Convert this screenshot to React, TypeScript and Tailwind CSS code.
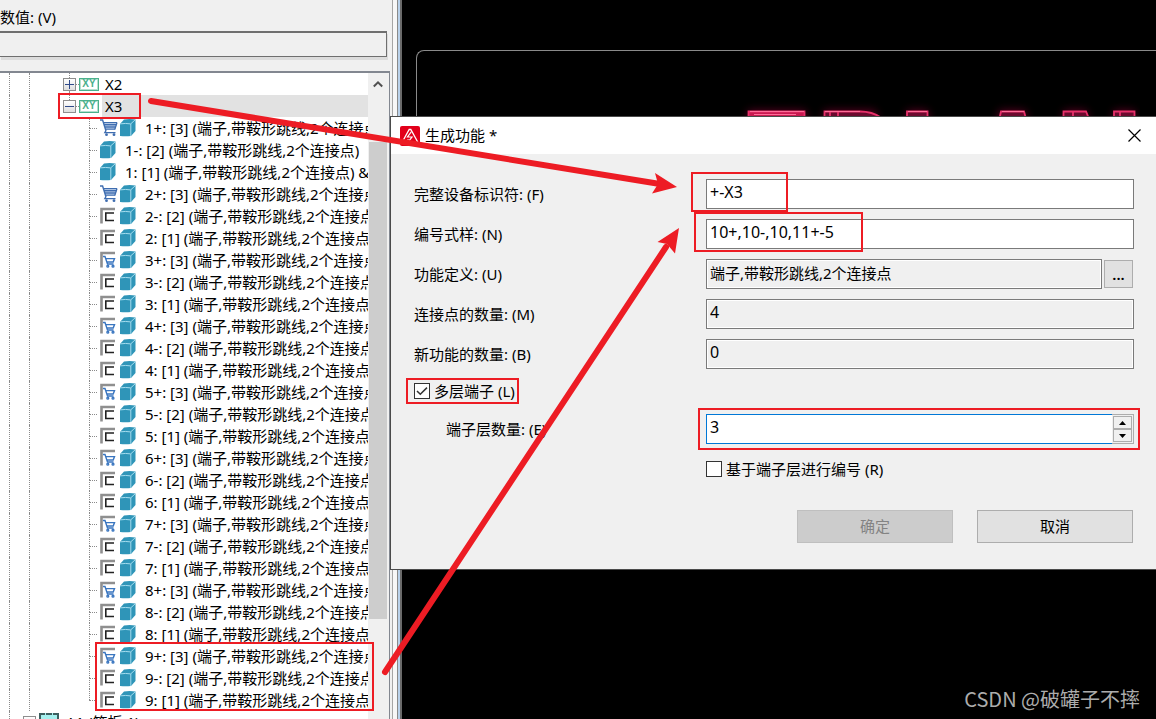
import type { ReactNode } from "react";

const SANS = "font-['Noto_Sans','Noto_Sans_CJK_SC',sans-serif]";

type Mark = "cart" | "bracket" | "bracketCart" | "none";

interface Terminal {
  mark: Mark;
  text: string;
}

const PART = "(端子,带鞍形跳线,2个连接点)";

const terminals: Terminal[] = [
  { mark: "cart", text: `1+: [3] ${PART}` },
  { mark: "none", text: `1-: [2] ${PART}` },
  { mark: "none", text: `1: [1] ${PART} &` },
  { mark: "cart", text: `2+: [3] ${PART}` },
  { mark: "bracket", text: `2-: [2] ${PART}` },
  { mark: "bracket", text: `2: [1] ${PART}` },
  ...[3, 4, 5, 6, 7, 8, 9].flatMap((n): Terminal[] => [
    { mark: "bracketCart", text: `${n}+: [3] ${PART}` },
    { mark: "bracket", text: `${n}-: [2] ${PART}` },
    { mark: "bracket", text: `${n}: [1] ${PART}` },
  ]),
];

function CubeIcon() {
  return (
    <svg className="h-[18px] w-4 shrink-0" viewBox="0 0 16 18" aria-hidden="true">
      <path d="M0 5 4 .5Q9.500 -.3 15.500 .5V12L11 17Q5.500 17.700 0 17Z" fill="#2f95b8" />
      <path d="M0 4.900Q5.500 4 10.700 4.900L15.200 .8M10.800 4.900V17" fill="none" stroke="#a5dcee" strokeWidth="1" />
    </svg>
  );
}

function CartIcon() {
  return (
    <svg className="h-[18px] w-[18px] shrink-0" viewBox="0 0 18 18" aria-hidden="true">
      <path d="M3.300 3H17L14.600 10.500H5.600Z" fill="#d5e2f4" />
      <g fill="none" stroke="#3f6db0">
        <path d="M0 1H2.600L6 12M3.400 3.600H17M4 5.800H16.400M4.700 8H15.600M5.300 10.100H15" strokeWidth="1.400" />
        <path d="M17 3.500 14.800 10.500M6 11.700 4.800 13.700H15.500" strokeWidth="1.300" />
      </g>
      <circle cx="6.500" cy="15.700" r="1.400" fill="#3f6db0" />
      <circle cx="14" cy="15.700" r="1.400" fill="#3f6db0" />
    </svg>
  );
}

function BracketIcon({ cart }: { cart?: boolean }) {
  return (
    <svg className="h-[18px] w-[18px] shrink-0" viewBox="0 0 18 18" aria-hidden="true">
      <path d="M1.500 16.500V2H15" fill="none" stroke="#8f8f8f" strokeWidth="2.600" />
      {cart ? (
        <g fill="none" stroke="#3a76c0" strokeWidth="1.400">
          <path d="M3 5.500H5L7.500 13H13.500M5.600 7.600H14.500L13.200 11H7" />
          <circle cx="7.800" cy="15.200" r=".9" />
          <circle cx="13" cy="15.200" r=".9" />
        </g>
      ) : (
        <path d="M14 6H5.800V13.500H14" fill="none" stroke="#222" strokeWidth="1.600" />
      )}
    </svg>
  );
}

function Expander({ open }: { open: boolean }) {
  return (
    <button
      type="button"
      aria-label={open ? "折叠" : "展开"}
      className="flex h-[13px] w-[13px] shrink-0 items-center justify-center border border-[#8e8e8e] bg-gradient-to-b from-white to-[#dedede]"
    >
      <svg className="h-[9px] w-[9px]" viewBox="0 0 9 9" aria-hidden="true">
        <path d={open ? "M0 4.500H9" : "M0 4.500H9M4.500 0V9"} stroke="#2f4a8a" fill="none" />
      </svg>
    </button>
  );
}

function Guides() {
  return (
    <>
      <span className="ml-[9px] w-5 shrink-0 self-stretch border-l border-dotted border-[#8a8a8a]" />
      <span className="w-[34px] shrink-0 self-stretch border-l border-dotted border-[#8a8a8a]" />
    </>
  );
}

function StripRow({ label, open, selected }: { label: string; open: boolean; selected?: boolean }) {
  return (
    <li className="flex h-[22px] items-center">
      <Guides />
      <span className="flex w-[13px] shrink-0 flex-col items-center self-stretch">
        <span className="h-[5px] border-l border-dotted border-[#8a8a8a]" />
        <Expander open={open} />
        {!open || !selected ? <span className="h-1 border-l border-dotted border-[#8a8a8a]" /> : null}
      </span>
      <span className="w-[3px] shrink-0 border-t border-dotted border-[#8a8a8a]" />
      <span className="flex h-[13px] w-5 shrink-0 items-center justify-center border border-[#4bb08c] bg-white font-['Liberation_Sans',sans-serif] text-[10px] leading-none font-bold text-[#4bb08c] shadow-[inset_0_0_0_1px_#b5e0d0]">
        XY
      </span>
      <span
        className={
          selected
            ? "ml-[3px] flex h-full flex-1 items-center bg-[#e2e2e2] pl-[3px]"
            : "ml-[3px] flex h-full flex-1 items-center pl-[3px]"
        }
      >
        {label}
      </span>
    </li>
  );
}

function TerminalRow({ item, last }: { item: Terminal; last: boolean }) {
  return (
    <li className="flex h-[22px] items-center whitespace-nowrap">
      <Guides />
      <span className="ml-[26px] flex w-[11px] shrink-0 flex-col self-stretch">
        <span className="h-[11px] border-l border-dotted border-[#8a8a8a]" />
        <span
          className={
            last
              ? "h-[11px] w-2 border-t border-dotted border-[#8a8a8a]"
              : "h-[11px] w-2 border-t border-l border-dotted border-[#8a8a8a]"
          }
        />
      </span>
      <span className="flex shrink-0 items-center gap-[2px] pr-[9px]">
        {item.mark === "cart" && <CartIcon />}
        {item.mark === "bracket" && <BracketIcon />}
        {item.mark === "bracketCart" && <BracketIcon cart />}
        <CubeIcon />
      </span>
      <span>{item.text}</span>
    </li>
  );
}

function Navigator() {
  return (
    <aside className="flex w-[402px] shrink-0 bg-[#f0f0f0]">
      <div className="flex min-w-0 flex-1 flex-col">
        <label htmlFor="value" className="flex h-[31px] shrink-0 items-center pt-[2px]">
          数值: (V)
        </label>
        <input
          id="value"
          className="mr-[3px] h-[26px] shrink-0 border border-l-0 border-t-2 border-[#6f6f6f] bg-[#f0f0f0] px-1 shadow-[1px_3px_0_#dcdcdc] outline-none"
        />
        <div className="mt-[14px] flex min-h-0 flex-1 border-t-2 border-r border-[#828790] bg-white">
          <ul className="min-w-0 flex-1 overflow-hidden">
            <StripRow label="X2" open={false} />
            <StripRow label="X3" open selected />
            {terminals.map((item, i) => (
              <TerminalRow key={item.text} item={item} last={i === terminals.length - 1} />
            ))}
            <li className="flex h-[22px] items-center">
              <span className="ml-[9px] w-[14px] shrink-0 self-stretch border-l border-dotted border-[#8a8a8a]" />
              <Expander open />
              <span className="w-[3px] shrink-0 border-t border-dotted border-[#8a8a8a]" />
              <span className="h-[18px] w-5 shrink-0 border-2 border-dashed border-[#3c5f5f] bg-[#a5f0ee]" />
              <span className="pl-[7px]">A1 (箱板 1)</span>
            </li>
          </ul>
          <div className="flex w-[21px] shrink-0 flex-col items-stretch bg-[#f0f0f0] pr-[2px] pl-px">
            <button type="button" aria-label="向上滚动" className="flex h-[69px] shrink-0 justify-center pt-[7px]">
              <svg className="h-2 w-[10px]" viewBox="0 0 10 8" aria-hidden="true">
                <path d="M.8 6.500 5 2.300 9.200 6.500" fill="none" stroke="#505050" strokeWidth="2" />
              </svg>
            </button>
            <div className="mb-[100px] flex-1 bg-[#cdcdcd]" />
          </div>
        </div>
      </div>
      <div className="flex w-3 shrink-0">
        <span className="ml-[2px] w-px bg-[#a5a5a5]" />
        <span className="w-1 bg-[#f7f7f7]" />
        <span className="w-px bg-[#8a8a8a]" />
        <span className="w-[2px] bg-[#b9d1ea]" />
        <span className="w-[2px] bg-[#6a6a6a]" />
      </div>
    </aside>
  );
}

function NeonLogo() {
  return (
    <svg className="absolute top-[90px] left-[318px] h-[60px] w-[420px]" viewBox="0 0 420 60" aria-hidden="true">
      <defs>
        <filter id="glow" filterUnits="userSpaceOnUse" x="0" y="-10" width="420" height="70">
          <feGaussianBlur stdDeviation="5" />
        </filter>
      </defs>
      <g stroke="#b00a40" strokeWidth="12" opacity=".6" filter="url(#glow)">
        <path d="M28 27H86M104 27H156M187 27H208M279 27H306M344 27H367M394 27H415" />
      </g>
      <g fill="#6b0a2e" stroke="#e8306a" strokeWidth="1.800">
        <path d="M28.500 21.500H84.500V40H28.500Z" fill="#c71a50" />
        <path d="M104.500 40V21.500H140Q152 21.500 161 27.500M110 40V22M118 40V22" />
        <path d="M187 40V21.500H207.500V40" />
        <path d="M277 40 281 21.500H304L309 40" />
        <path d="M343.500 40V21.500H366L372 36M353 40V22" />
        <path d="M394 40V21.500H414.500V40M400 40V22" />
      </g>
      <path d="M282 21.500H304M30 21.500H84M34 24.500H76M105 21.500H140M188 21.500H207" stroke="#ff6c98" strokeWidth="1" />
    </svg>
  );
}

function AppIcon() {
  return (
    <svg className="h-5 w-5 shrink-0" viewBox="0 0 20 20" aria-hidden="true">
      <rect width="20" height="20" rx="2" fill="#e2001a" />
      <path d="M2 16.500 9.200 3.500H10.800L18 16.500" fill="none" stroke="#fff" strokeWidth="1.300" />
      <path d="M11.500 5.500 7.500 11H12L8.500 15.500" fill="none" stroke="#fff" strokeWidth="1.200" />
      <path d="M8 13V16.200H11" fill="none" stroke="#fff" strokeWidth="1" />
    </svg>
  );
}

function Field({ id, label, indent, children }: { id: string; label: string; indent?: boolean; children: ReactNode }) {
  return (
    <div className="flex h-[30px] items-center">
      <label htmlFor={id} className={indent ? "w-[292px] shrink-0 pl-8" : "w-[292px] shrink-0"}>
        {label}
      </label>
      {children}
    </div>
  );
}

function Check({ id, label, checked }: { id: string; label: string; checked?: boolean }) {
  return (
    <div className="flex h-5 items-center">
      <span className="relative h-4 w-4 shrink-0">
        <input
          id={id}
          type="checkbox"
          defaultChecked={checked}
          className="peer block h-4 w-4 appearance-none border border-[#333] bg-white"
        />
        <svg
          className="pointer-events-none absolute inset-0 hidden h-4 w-4 peer-checked:block"
          viewBox="0 0 16 16"
          aria-hidden="true"
        >
          <path d="M3 8 6.300 11.300 13 4.600" fill="none" stroke="#333" strokeWidth="1.500" />
        </svg>
      </span>
      <label htmlFor={id} className="pl-1">
        {label}
      </label>
    </div>
  );
}

const EDIT = "h-full min-w-0 flex-1 border border-[#7a7a7a] bg-white px-[3px] pb-1 text-base outline-none";
const READONLY =
  "h-full min-w-0 flex-1 border border-[#7a7a7a] bg-[#f0f0f0] px-[3px] pb-1 outline-none shadow-[inset_0_0_0_1px_#fff]";

function FunctionDialog() {
  return (
    <section
      role="dialog"
      aria-labelledby="dialog-title"
      className="absolute top-[116px] right-0 left-[390px] border border-r-0 border-[#4a4a4a] bg-[#f0f0f0]"
    >
      <header className="flex h-[37px] items-center bg-white pr-[15px] pl-[9px]">
        <AppIcon />
        <h1 id="dialog-title" className="flex-1 pb-[2px] pl-[5px]">
          生成功能 *
        </h1>
        <button type="button" aria-label="关闭" className="h-[13px] w-[13px]">
          <svg className="h-[13px] w-[13px]" viewBox="0 0 13 13" aria-hidden="true">
            <path d="M.5 .5 12.500 12.500M12.500 .5 .5 12.500" stroke="#000" strokeWidth="1.200" />
          </svg>
        </button>
      </header>
      <form className="pt-[25px] pr-[22px] pb-[26px] pl-[23px]" onSubmit={(e) => e.preventDefault()}>
        <div className="flex flex-col gap-[10px]">
          <Field id="f-id" label="完整设备标识符: (F)">
            <input id="f-id" defaultValue="+-X3" className={EDIT} />
          </Field>
          <Field id="f-num" label="编号式样: (N)">
            <input id="f-num" defaultValue="10+,10-,10,11+-5" className={EDIT} />
          </Field>
          <Field id="f-def" label="功能定义: (U)">
            <input id="f-def" readOnly value="端子,带鞍形跳线,2个连接点" className={READONLY} />
            <button
              type="button"
              aria-label="选择功能定义"
              className="mr-px ml-[2px] h-7 w-[29px] border border-[#adadad] bg-[#e1e1e1] font-semibold"
            >
              ...
            </button>
          </Field>
          <Field id="f-con" label="连接点的数量: (M)">
            <input id="f-con" readOnly value="4" className={`${READONLY} text-base`} />
          </Field>
          <Field id="f-new" label="新功能的数量: (B)">
            <input id="f-new" readOnly value="0" className={`${READONLY} text-base`} />
          </Field>
        </div>
        <div className="pt-3 pb-[13px]">
          <Check id="f-multi" label="多层端子 (L)" checked />
        </div>
        <Field id="f-levels" label="端子层数量: (E)" indent>
          <input
            id="f-levels"
            inputMode="numeric"
            defaultValue="3"
            className="h-full min-w-0 flex-1 border border-r-0 border-[#0078d7] bg-white px-[3px] pb-1 text-base outline-none"
          />
          <span className="flex h-full w-[22px] shrink-0 flex-col border border-l-0 border-[#adadad] bg-[#f0f0f0] p-px">
            <button type="button" aria-label="增加" className="flex flex-1 items-center justify-center border border-[#adadad]">
              <svg className="h-1 w-[7px]" viewBox="0 0 7 4" aria-hidden="true">
                <path d="M0 4 3.500 0 7 4Z" />
              </svg>
            </button>
            <button type="button" aria-label="减少" className="flex flex-1 items-center justify-center border border-[#adadad]">
              <svg className="h-1 w-[7px]" viewBox="0 0 7 4" aria-hidden="true">
                <path d="M0 0H7L3.500 4Z" />
              </svg>
            </button>
          </span>
        </Field>
        <div className="pt-[15px] pl-[292px]">
          <Check id="f-by-level" label="基于端子层进行编号 (R)" />
        </div>
        <div className="flex justify-end gap-6 pt-[31px] pr-px">
          <button type="submit" disabled className="h-[33px] w-[156px] border border-[#bfbfbf] bg-[#cccccc] pb-[2px] text-[#838383]">
            确定
          </button>
          <button type="button" className="h-[33px] w-[156px] border border-[#adadad] bg-[#e1e1e1] pb-[2px]">
            取消
          </button>
        </div>
      </form>
    </section>
  );
}

function Annotations() {
  return (
    <svg
      className="pointer-events-none absolute top-0 left-0 h-[719px] w-[1156px]"
      viewBox="0 0 1156 719"
      aria-hidden="true"
    >
      <g fill="none" stroke="#ed1c24" strokeWidth="2">
        <rect x="59" y="94" width="81" height="24" />
        <rect x="96" y="643" width="277" height="67" />
        <rect x="692" y="173" width="95" height="38" />
        <rect x="695" y="213" width="167" height="38" />
        <rect x="407" y="379" width="111" height="24" />
        <rect x="699" y="409" width="440" height="40" />
      </g>
      <g stroke="#ed1c24" strokeWidth="6" strokeLinecap="round">
        <path d="M151 101 660 184" />
        <path d="M385 672 666 247" />
      </g>
      <g fill="#ed1c24">
        <path d="M677 187 655 173 658 184 652 193.500Z" />
        <path d="M679 228 657.500 242 667 244 675 253.500Z" />
      </g>
    </svg>
  );
}

export default function App() {
  return (
    <div className={`relative flex h-screen overflow-hidden bg-black text-[15px] leading-5 text-black ${SANS}`}>
      <Navigator />
      <main className="relative flex min-w-0 flex-1 flex-col justify-between overflow-hidden">
        <div className="mt-[50px] ml-[14px] h-[100px] rounded-tl-[8px] border-t border-l border-[#8a8a8a]" />
        <NeonLogo />
        <p className="pr-4 pb-[6px] text-right font-['Noto_Sans_CJK_SC',sans-serif] text-xl leading-7 text-[#acacac]">
          CSDN @破罐子不摔
        </p>
      </main>
      <FunctionDialog />
      <Annotations />
    </div>
  );
}
